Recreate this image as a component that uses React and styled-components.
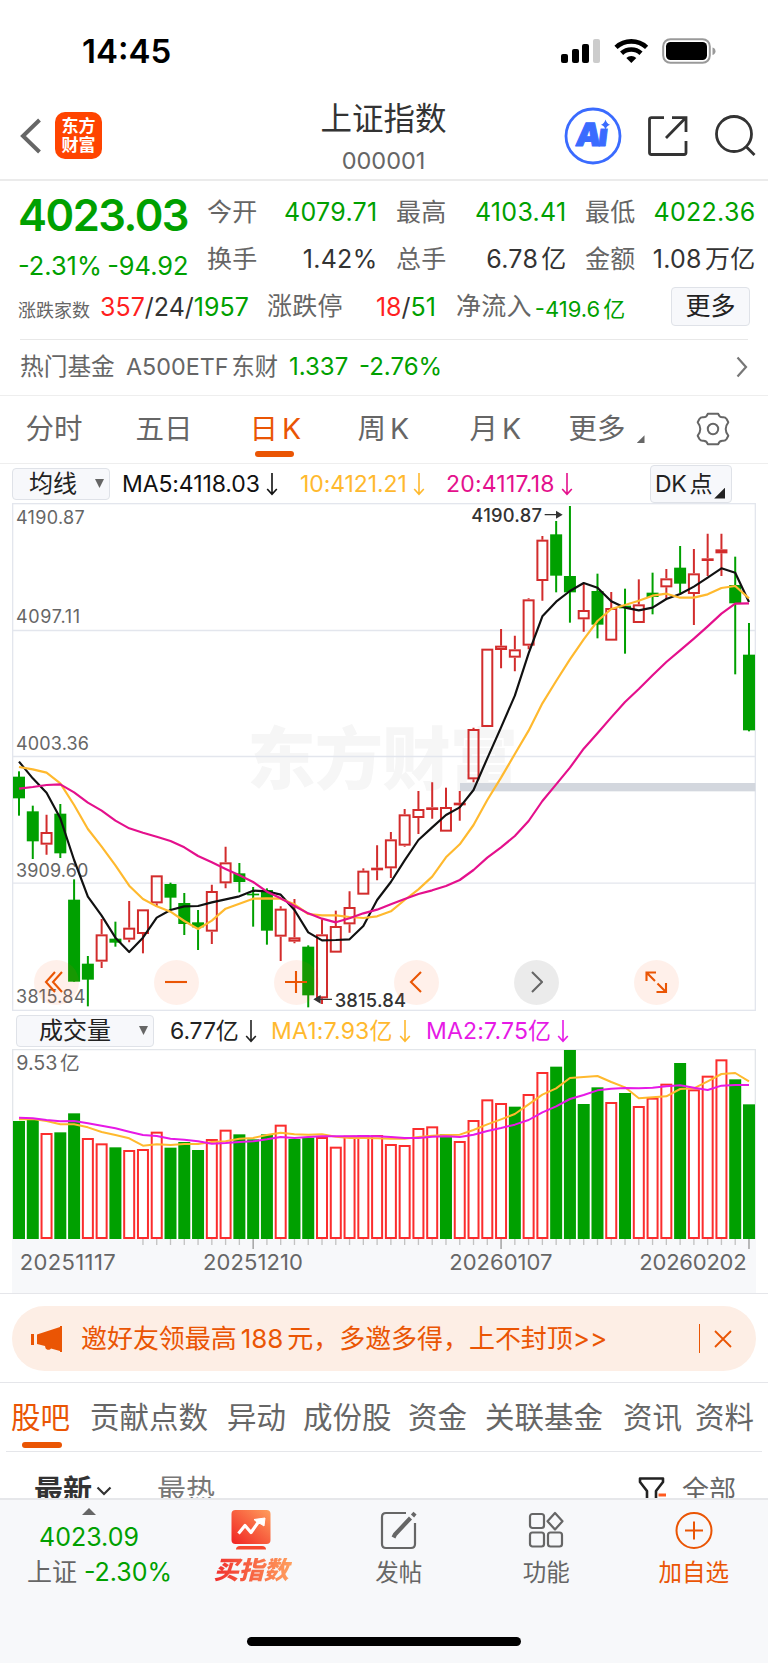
import React from 'react';
import styled, { createGlobalStyle } from 'styled-components';

const GREEN = '#00a000';
const RED = '#ff1f1f';
const ORANGE = '#ea5504';
const YELLOW = '#ffb92e';
const PINK = '#e4108c';
const MAGENTA = '#e619e6';

const STEP = 41.32;
const barX = (i) => 21 + i * STEP;

// [direction, high, body top, body bottom, low], three units to a pixel
const candles = [
  ['g', 805, 821, 886, 938], ['g', 908, 925, 1015, 1068], ['r', 935, 987, 1025, 1055],
  ['g', 903, 932, 1051, 1065], ['g', 1129, 1190, 1436, 1436], ['g', 1359, 1382, 1430, 1510],
  ['r', 1248, 1294, 1376, 1395], ['g', 1256, 1307, 1319, 1331], ['r', 1194, 1274, 1310, 1318],
  ['r', 1219, 1219, 1293, 1351], ['r', 1117, 1117, 1201, 1211], ['g', 1139, 1143, 1184, 1221],
  ['g', 1170, 1200, 1263, 1296], ['g', 1221, 1258, 1273, 1341], ['r', 1145, 1164, 1286, 1323],
  ['r', 1031, 1078, 1141, 1156], ['g', 1080, 1111, 1137, 1168], ['g', 1152, 1172, 1177, 1271],
  ['g', 1156, 1161, 1283, 1325], ['r', 1210, 1217, 1301, 1374], ['r', 1188, 1303, 1316, 1321],
  ['g', 1327, 1331, 1477, 1513], ['r', 1249, 1294, 1486, 1503], ['r', 1223, 1269, 1349, 1349],
  ['r', 1165, 1212, 1264, 1289], ['r', 1096, 1103, 1175, 1175], ['r', 1027, 1094, 1102, 1132],
  ['r', 987, 1009, 1096, 1125], ['r', 918, 934, 1028, 1031], ['r', 864, 918, 945, 993],
  ['r', 838, 913, 921, 947], ['r', 854, 912, 986, 986], ['r', 864, 899, 907, 953],
  ['r', 674, 678, 829, 838], ['r', 437, 437, 672, 672], ['r', 378, 428, 441, 496],
  ['r', 398, 439, 464, 505], ['r', 286, 289, 428, 439], ['r', 99, 110, 234, 293],
  ['g', 54, 94, 218, 268], ['g', 9, 219, 268, 359], ['r', 243, 321, 349, 386],
  ['g', 212, 264, 365, 406], ['r', 267, 315, 413, 413], ['g', 257, 308, 316, 452],
  ['r', 229, 304, 360, 360], ['g', 209, 269, 282, 334], ['r', 198, 226, 253, 289],
  ['g', 129, 194, 242, 271], ['r', 138, 211, 273, 366], ['r', 92, 166, 174, 219],
  ['r', 92, 139, 151, 219], ['g', 161, 246, 301, 514], ['g', 360, 455, 682, 685],
];

const ma5 = [776, 826, 869, 946, 1071, 1181, 1238, 1304, 1347, 1304, 1244, 1221, 1210, 1209, 1198, 1189, 1180, 1163, 1165, 1175, 1221, 1288, 1312, 1311, 1309, 1269, 1191, 1137, 1072, 1011, 973, 936, 913, 861, 766, 673, 578, 451, 340, 296, 264, 240, 254, 295, 314, 322, 314, 288, 273, 251, 224, 196, 209, 297];
const ma10 = [792, 799, 809, 841, 906, 978, 1031, 1087, 1148, 1188, 1210, 1226, 1254, 1278, 1253, 1217, 1202, 1187, 1186, 1187, 1204, 1233, 1237, 1237, 1242, 1245, 1240, 1225, 1191, 1159, 1121, 1063, 1024, 966, 891, 824, 753, 683, 601, 534, 469, 409, 354, 318, 306, 293, 278, 272, 284, 284, 274, 255, 249, 286];
const ma20 = [857, 852, 846, 844, 868, 899, 923, 953, 976, 989, 1001, 1014, 1033, 1059, 1078, 1098, 1117, 1137, 1166, 1186, 1209, 1231, 1247, 1258, 1246, 1231, 1220, 1204, 1188, 1173, 1162, 1149, 1131, 1101, 1064, 1033, 999, 954, 894, 844, 794, 737, 691, 643, 597, 558, 517, 477, 442, 407, 370, 332, 302, 301];

const volColors = 'ggrggrrgrrrgggrrgggrggrrrrrrrrrgrrrrgrrggggrgrrrgrrrgg';
const volTops = [333, 330, 371, 367, 310, 386, 402, 412, 422, 419, 367, 413, 396, 420, 389, 361, 373, 388, 373, 346, 387, 383, 383, 412, 379, 377, 377, 404, 407, 356, 351, 373, 395, 332, 270, 281, 290, 254, 188, 170, 120, 282, 232, 278, 249, 290, 265, 223, 159, 240, 199, 150, 208, 283];
const volMa1 = [328, 327, 333, 343, 343, 352, 366, 375, 385, 407, 403, 405, 402, 402, 396, 394, 386, 384, 375, 368, 373, 374, 373, 380, 384, 384, 385, 386, 386, 381, 377, 375, 374, 360, 343, 328, 312, 283, 254, 235, 204, 201, 198, 216, 232, 265, 262, 259, 237, 235, 214, 192, 189, 214];
const volMa2 = [323, 325, 330, 334, 333, 340, 347, 355, 365, 375, 378, 386, 389, 394, 401, 399, 396, 394, 388, 381, 384, 381, 379, 379, 379, 378, 379, 381, 384, 384, 380, 379, 381, 374, 363, 354, 344, 330, 307, 289, 267, 255, 241, 236, 234, 235, 233, 229, 226, 233, 240, 227, 225, 225];

const toPoints = (values) => values.map((v, i) => `${barX(i)},${v}`).join(' ');

const DownArrow = ({ color }) => (
  <ArrowSvg width="12" height="24" viewBox="0 0 12 24" fill="none" stroke={color} strokeWidth="1.6">
    <path d="M6 1v21M1.2 17 6 22.4 10.8 17" />
  </ArrowSvg>
);

const PriceChart = () => (
  <svg width="744" height="508" viewBox="0 0 2232 1524">
    <text x="706" y="842" fontSize="205" fontWeight="900" textLength="812" fill="#f6f6f6">东方财富</text>
    <g stroke="#e3e6ed" strokeWidth="4" fill="none">
      <rect x="2" y="2" width="2228" height="1520" />
      <path d="M2 382.5H2230M2 760.5H2230M2 1140.5H2230" />
    </g>
    <rect x="1344" y="840" width="886" height="25" fill="#d3d7de" />
    <g fontSize="54" fill="#666">
      <text x="12" y="62" textLength="206">4190.87</text>
      <text x="12" y="361" textLength="192">4097.11</text>
      <text x="12" y="741" textLength="219">4003.36</text>
      <text x="12" y="1121" textLength="217">3909.60</text>
      <text x="12" y="1500" textLength="208">3815.84</text>
    </g>
    {candles.map(([dir, high, top, bottom, low], i) => {
      const x = barX(i);
      if (dir === 'g') {
        return (
          <g key={i} fill={GREEN}>
            <rect x={x - 3} y={high} width="6" height={low - high} />
            <rect x={x - 18} y={top} width="36" height={bottom - top} />
          </g>
        );
      }
      return (
        <g key={i} stroke="#d22c2c" strokeWidth="6" fill="none">
          <path d={`M${x} ${high}V${top}M${x} ${bottom}V${low}`} />
          <rect x={x - 15} y={top + 3} width="30" height={bottom - top - 6} />
        </g>
      );
    })}
    <g fill="none" strokeWidth="6.5" strokeLinejoin="round">
      <polyline points={toPoints(ma5)} stroke="#111" />
      <polyline points={toPoints(ma10)} stroke={YELLOW} />
      <polyline points={toPoints(ma20)} stroke={PINK} />
    </g>
    <g fontSize="55" fontWeight="500" fill="#333">
      <text x="1378" y="58" textLength="212">4190.87</text>
      <text x="968" y="1511" textLength="214">3815.84</text>
      <path d="M1598 33h34v-10l20 12-20 12v-10h-34z" />
      <path d="M960 1487h-34v-11l-22 13 22 13v-11h34z" />
    </g>
  </svg>
);

const VolumeChart = () => (
  <svg width="744" height="244" viewBox="0 117 2232 732">
    <rect x="0" y="687" width="2232" height="162" fill="#f7f8fa" />
    <path d="M2 687V119H2230V687" fill="none" stroke="#e3e6ea" strokeWidth="4" />
    {volTops.map((top, i) => (
      volColors[i] === 'g'
        ? <rect key={i} x={barX(i) - 18} y={top} width="36" height={687 - top} fill={GREEN} />
        : <rect key={i} x={barX(i) - 15} y={top + 1} width="30" height={683 - top} fill="#fff" stroke="#fb2d2d" strokeWidth="6" />
    ))}
    {volTops.map((top, i) => (i < 9 ? null : (
      <rect key={i} x={barX(i) - 2} y="687" width="4" height={i % 18 === 17 ? 30 : 18} fill={i % 18 === 17 ? '#999' : '#c3c3c3'} />
    )))}
    <g fill="none" strokeWidth="6" strokeLinejoin="round">
      <polyline points={toPoints(volMa1)} stroke={YELLOW} />
      <polyline points={toPoints(volMa2)} stroke={MAGENTA} />
    </g>
    <g fontSize="66" fill="#666">
      <text x="13" y="179" fontSize="59" textLength="123">9.53</text>
      <text x="144" y="179" fontSize="59">亿</text>
      <text x="23" y="780" textLength="288">20251117</text>
      <text x="573" y="780" textLength="300">20251210</text>
      <text x="1312" y="780" textLength="309">20260107</text>
      <text x="1882" y="780" textLength="322">20260202</text>
    </g>
  </svg>
);

const stockTabs = ['股吧', '贡献点数', '异动', '成份股', '资金', '关联基金', '资讯', '资料'];

const App = () => (
  <Page>
    <GlobalStyle />
    <StatusBar>
      <Clock>14:45</Clock>
      <svg width="156" height="28" viewBox="0 0 156 28">
        <rect x="0" y="16" width="7" height="9" rx="2" />
        <rect x="11" y="11" width="7" height="14" rx="2" />
        <rect x="21" y="6" width="7" height="19" rx="2" />
        <rect x="32" y="1" width="7" height="24" rx="2" fill="#ccc" />
        <g fill="none" stroke="#000" strokeWidth="4.6">
          <path d="M55 9.4a22.5 22.5 0 0 1 30.6 0" />
          <path d="M60.6 15.3a14.3 14.3 0 0 1 19.4 0" />
        </g>
        <path d="M65.3 20a7.4 7.4 0 0 1 10 0l-5 5z" />
        <rect x="102.2" y="1.2" width="46.6" height="23.6" rx="7.2" fill="none" stroke="#9a9a9a" strokeWidth="2" />
        <rect x="105" y="4" width="41" height="18" rx="4.5" />
        <path d="M151.5 9.5v7.5q3-1 3-3.8t-3-3.7z" fill="#9a9a9a" />
      </svg>
    </StatusBar>

    <Header>
      <svg width="22" height="36" viewBox="0 0 22 36" fill="none" stroke="#666" strokeWidth="4">
        <path d="M19.5 2 3 18l16.5 16" />
      </svg>
      <Logo>东方<br />财富</Logo>
      <Heading>
        <Title>上证指数</Title>
        <Code>000001</Code>
      </Heading>
      <HeaderIcons>
        <svg width="58" height="58" viewBox="0 0 58 58">
          <circle cx="29" cy="29" r="27" fill="none" stroke="#3a6bff" strokeWidth="2.8" />
          <g transform="translate(4.5 0) skewX(-7)">
            <text x="11" y="39" fontSize="32" fontWeight="900" textLength="32" fill="#3a6bff" stroke="#3a6bff" strokeWidth="1" strokeLinejoin="round">Ai</text>
          </g>
          <rect x="34" y="12" width="13" height="9.5" fill="#fff" />
          <path d="M41.5 12.5q1 4 4.5 5.3-3.5 1-4.5 5-1-4-4.5-5 3.5-1.3 4.5-5.3z" fill="#3a6bff" />
        </svg>
        <svg width="40" height="40" viewBox="0 0 40 40" fill="none" stroke="#333" strokeWidth="2.8">
          <path d="M16 1.6H3.5Q1.5 1.6 1.5 3.6V36.5q0 2 2 2H36q2 0 2-2V25M24 1.6H38V16M38 1.6 18 22" />
        </svg>
        <svg width="42" height="42" viewBox="0 0 42 42" fill="none" stroke="#333" strokeWidth="2.8">
          <circle cx="20" cy="19" r="17.5" />
          <path d="M32 31.5 40.5 40" />
        </svg>
      </HeaderIcons>
    </Header>

    <Quote>
      <Summary>
        <Price>4023.03</Price>
        <Change><span>-2.31%</span><span>-94.92</span></Change>
      </Summary>
      <Stats>
        <Stat><Label>今开</Label><Value $color={GREEN}>4079.71</Value></Stat>
        <Stat><Label>最高</Label><Value $color={GREEN}>4103.41</Value></Stat>
        <Stat><Label>最低</Label><Value $color={GREEN}>4022.36</Value></Stat>
        <Stat><Label>换手</Label><Value>1.42%</Value></Stat>
        <Stat><Label>总手</Label><Value>6.78<Unit>亿</Unit></Value></Stat>
        <Stat><Label>金额</Label><Value>1.08<Unit>万亿</Unit></Value></Stat>
      </Stats>
    </Quote>
    <Breadth>
      <SmallLabel>涨跌家数</SmallLabel>
      <Counts $width="167px"><Up>357</Up>/24/<Down>1957</Down></Counts>
      <Label>涨跌停</Label>
      <Counts $width="93px" $right><Up>18</Up>/<Down>51</Down></Counts>
      <FlowLabel>净流入</FlowLabel>
      <Flow>-419.6<Unit>亿</Unit></Flow>
      <MoreButton>更多</MoreButton>
    </Breadth>
    <FundRow>
      <FundName>热门基金</FundName>
      <FundCode>A500ETF<Unit>东财</Unit></FundCode>
      <FundValue $width="70px">1.337</FundValue>
      <FundValue>-2.76%</FundValue>
      <svg width="12" height="22" viewBox="0 0 12 22" fill="none" stroke="#777" strokeWidth="2.2">
        <path d="M1.5 1.5 10 11 1.5 20.5" />
      </svg>
    </FundRow>

    <PeriodTabs>
      <Period>分时</Period>
      <Period>五日</Period>
      <Period $active>日<Latin>K</Latin></Period>
      <Period>周<Latin>K</Latin></Period>
      <Period>月<Latin>K</Latin></Period>
      <Period>更多<Corner $size="8px" $color="#666" /></Period>
      <svg width="34" height="34" viewBox="0 0 34 34" fill="none" stroke="#666" strokeWidth="2" strokeLinejoin="round">
        <path d="M11.8 1.8h10.4q1 3.6 4.6 3.5 2.4-.3 3.8 1.7l1.7 3.3q-2.6 3.2-2.6 6.7t2.6 6.7l-1.7 3.3q-1.4 2-3.8 1.7-3.6-.1-4.6 3.5H11.8q-1-3.6-4.6-3.5-2.4.3-3.8-1.7l-1.7-3.3Q4.3 20.5 4.3 17t-2.6-6.7L3.4 7q1.4-2 3.8-1.7 3.6.1 4.6-3.5z" />
        <circle cx="17" cy="17" r="5.2" />
      </svg>
    </PeriodTabs>

    <Indicators>
      <Picker $width="98px">均线<Caret /></Picker>
      <Reading $width="178px" $color="#111">MA5:4118.03<DownArrow color="#111" /></Reading>
      <Reading $width="146px" $color={YELLOW}>10:4121.21<DownArrow color={YELLOW} /></Reading>
      <Reading $wide $color={PINK}>20:4117.18<DownArrow color={PINK} /></Reading>
      <DkButton>DK<Unit>点</Unit><Corner $size="11px" $color="#222" /></DkButton>
    </Indicators>
    <Panel>
      <PriceChart />
      <ChartControls>
        <Round><svg width="24" height="22" viewBox="0 0 24 22"><path d="M11 1 2 11l9 10M18 1 9 11l9 10" /></svg></Round>
        <Round><svg width="22" height="22" viewBox="0 0 22 22"><path d="M0 11h22" /></svg></Round>
        <Round><svg width="22" height="22" viewBox="0 0 22 22"><path d="M0 11h22M11 0v22" /></svg></Round>
        <Round><svg width="14" height="22" viewBox="0 0 14 22"><path d="M12 1 2 11l10 10" /></svg></Round>
        <Round $muted><svg width="14" height="22" viewBox="0 0 14 22"><path d="M3 1l10 10L3 21" /></svg></Round>
        <Round><svg width="24" height="24" viewBox="0 0 24 24"><path d="M2.5 11V2.5H12M3 3l8 8M22 13v9h-9.5M21.5 21.5l-8-8" /></svg></Round>
      </ChartControls>
    </Panel>
    <Indicators $volume>
      <Picker $width="138px">成交量<Caret /></Picker>
      <Reading $width="101px" $color="#222">6.77亿<DownArrow color="#222" /></Reading>
      <Reading $width="155px" $wide $color={YELLOW}>MA1:7.93亿<DownArrow color={YELLOW} /></Reading>
      <Reading $wide $color={MAGENTA}>MA2:7.75亿<DownArrow color={MAGENTA} /></Reading>
    </Indicators>
    <Panel>
      <VolumeChart />
    </Panel>

    <BannerWrap>
      <Banner>
        <svg width="32" height="26" viewBox="0 0 32 26" fill={ORANGE}>
          <path d="M0 8h3v11H0zM6 8.5 29 1V0h2v26h-2v-1l-9-2.5c-1 2-5 1.5-5.5-.5l-.5-2L6 18z" />
        </svg>
        <BannerText>邀好友领最高<Digits>188</Digits>元，多邀多得，上不封顶&gt;&gt;</BannerText>
        <BannerClose>
          <svg width="18" height="18" viewBox="0 0 18 18" fill="none" stroke={ORANGE} strokeWidth="1.8">
            <path d="M1 1l16 16M17 1 1 17" />
          </svg>
        </BannerClose>
      </Banner>
    </BannerWrap>

    <StockTabs>
      {stockTabs.map((name, i) => <StockTab key={name} $active={i === 0}>{name}</StockTab>)}
    </StockTabs>
    <Feed>
      <FeedSort $active>最新</FeedSort>
      <svg width="16" height="10" viewBox="0 0 16 10" fill="none" stroke="#333" strokeWidth="2.2">
        <path d="M1.5 1.5 8 8l6.5-6.5" />
      </svg>
      <FeedSort>最热</FeedSort>
      <FeedFilter>
        <svg width="30" height="28" viewBox="0 0 30 28" fill="none" stroke="#222" strokeWidth="2.6" strokeLinejoin="round">
          <path d="M9 28V14L2 5V1.5h23V5l-7 9v14" />
          <path d="M20.5 18h7.5" stroke="#ff5a1f" strokeWidth="3" />
        </svg>
        全部
      </FeedFilter>
    </Feed>

    <BottomBar>
      <IndexItem>
        <UpTriangle />
        <Down>4023.09</Down>
        <IndexLine><span>上证</span><Down>-2.30%</Down></IndexLine>
      </IndexItem>
      <NavItem>
        <svg width="40" height="40" viewBox="0 0 40 40">
          <defs>
            <linearGradient id="buy" x1="0" y1="1" x2="1" y2="0">
              <stop offset="0" stopColor="#f02222" />
              <stop offset="1" stopColor="#ff9e5c" />
            </linearGradient>
          </defs>
          <rect x="0.5" y="0" width="39" height="34" rx="4" fill="url(#buy)" />
          <path d="M5 39.5q0-3.5 4-3.5h22q4 0 4 3.5z" fill="#f5472f" />
          <path d="M7.5 23.5 14 15.5l6 7 8.5-12" fill="none" stroke="#fff" strokeWidth="3.2" strokeLinejoin="round" />
          <path d="M23 9.5 34 8l-1 8-3-2-3-1z" fill="#fff" stroke="#fff" strokeLinejoin="round" />
        </svg>
        <BuyText>买指数</BuyText>
      </NavItem>
      <NavItem>
        <svg width="38" height="40" viewBox="0 0 38 40" fill="none" stroke="#666" strokeWidth="2.2">
          <path d="M26 3H6Q2 3 2 7v27q0 4 4 4h25q4 0 4-4V13" />
          <path d="M30.5 8 15 24.5l-1.5 3" strokeWidth="4.2" />
          <path d="M32.5 6 35 3.2" strokeWidth="4.2" />
        </svg>
        发帖
      </NavItem>
      <NavItem>
        <svg width="36" height="40" viewBox="0 0 36 40" fill="none" stroke="#666" strokeWidth="2.2" strokeLinejoin="round">
          <rect x="2" y="4" width="14" height="14" rx="2.5" />
          <rect x="2" y="22.5" width="14" height="14" rx="2.5" />
          <rect x="20" y="22.5" width="14" height="14" rx="2.5" />
          <path d="M27 3l7.5 8.3-7.5 8.2-7.5-8.2z" />
        </svg>
        功能
      </NavItem>
      <NavItem $accent>
        <svg width="40" height="40" viewBox="0 0 40 40" fill="none" stroke={ORANGE} strokeWidth="2">
          <circle cx="20" cy="20.5" r="17.5" />
          <path d="M11 20.5h18M20 11.5v18" />
        </svg>
        加自选
      </NavItem>
      <HomeIndicator />
    </BottomBar>
  </Page>
);

const GlobalStyle = createGlobalStyle`
  * {
    box-sizing: border-box;
  }

  body {
    margin: 0;
    background: #fff;
    font-family: Inter, 'Noto Sans CJK SC', sans-serif;
  }

  svg {
    display: block;
    flex: none;
  }
`;

const Page = styled.div`
  width: 768px;
  height: 1663px;
  overflow: hidden;
  color: #666;
  line-height: 1;
  white-space: nowrap;
`;

const StatusBar = styled.div`
  display: flex;
  justify-content: space-between;
  align-items: center;
  height: 92px;
  padding: 11px 51px 0 82px;
`;

const Clock = styled.div`
  font-size: 33px;
  font-weight: 600;
  color: #000;
`;

const Header = styled.header`
  display: grid;
  grid-template-columns: 35px 227px 1fr 262px;
  align-items: center;
  height: 89px;
  padding-left: 20px;
  border-bottom: 2px solid #ebebeb;
`;

const Logo = styled.div`
  width: 47px;
  height: 47px;
  padding-top: 5px;
  border-radius: 10px;
  background: #ff4400;
  color: #fff;
  font-size: 17px;
  font-weight: 700;
  line-height: 18.5px;
  text-align: center;
`;

const Heading = styled.div`
  display: flex;
  flex-direction: column;
  align-items: center;
  gap: 15px;
  width: 203px;
  padding-top: 4px;
`;

const Title = styled.div`
  font-size: 31.5px;
  color: #333;
`;

const Code = styled.div`
  font-size: 23.5px;
  color: #666;
`;

const HeaderIcons = styled.div`
  display: flex;
  align-items: center;
  gap: 26px;
  margin-left: 58px;
`;

const Quote = styled.section`
  display: flex;
  height: 101px;
  padding: 8px 13px 0 18px;
`;

const Summary = styled.div`
  display: flex;
  flex-direction: column;
  width: 189px;
  padding-top: 5px;
`;

const Price = styled.div`
  font-size: 43.5px;
  font-weight: 600;
  letter-spacing: -1.5px;
  color: ${GREEN};
`;

const Change = styled.div`
  display: flex;
  justify-content: space-between;
  width: 170.5px;
  margin-top: 15px;
  font-size: 25.4px;
  color: ${GREEN};
`;

const Stats = styled.div`
  display: grid;
  grid-template-columns: repeat(3, 169px);
  grid-auto-rows: 47px;
  column-gap: 20px;
`;

const Stat = styled.div`
  display: flex;
  justify-content: space-between;
  align-items: center;
`;

const Label = styled.span`
  font-size: 25px;
  letter-spacing: 0.3px;
  color: #666;
`;

const Value = styled.span`
  margin-right: -1.5px;
  font-size: 25px;
  letter-spacing: 0.3px;
  color: ${(props) => props.$color || '#333'};
`;

const Unit = styled.span`
  margin-left: 3px;
`;

const Breadth = styled.div`
  display: flex;
  align-items: center;
  height: 57px;
  padding: 0 18px 8px 0;
  margin-left: 19px;
`;

const SmallLabel = styled.span`
  width: 82px;
  margin-left: -1px;
  padding-top: 9px;
  font-size: 18px;
`;

const Counts = styled.span`
  width: ${(props) => props.$width};
  padding-top: 1px;
  font-size: 25px;
  text-align: ${(props) => (props.$right ? 'right' : 'left')};
  color: #333;
`;

const Up = styled.span`
  color: ${RED};
`;

const Down = styled.span`
  color: ${GREEN};
`;

const FlowLabel = styled(Label)`
  margin-left: 20px;
`;

const Flow = styled.span`
  margin-left: 3px;
  padding-top: 5px;
  font-size: 22px;
  color: ${GREEN};
`;

const MoreButton = styled.button`
  width: 79px;
  height: 39px;
  margin-left: auto;
  padding: 0;
  border: 1px solid #dfe2e8;
  border-radius: 4px;
  background: #f7f8fb;
  font: 25px Inter, 'Noto Sans CJK SC', sans-serif;
  line-height: 1;
  color: #222;
`;

const FundRow = styled.div`
  display: flex;
  align-items: center;
  height: 56px;
  margin: 0 20px;
  padding-bottom: 1px;
  border-top: 1px solid #e8e8e8;
  font-size: 24px;

  svg {
    margin-left: auto;
  }
`;

const FundName = styled.span`
  width: 106px;
  font-size: 23.7px;
`;

const FundCode = styled.span`
  width: 163px;
  font-size: 23.3px;
`;

const FundValue = styled.span`
  width: ${(props) => props.$width || 'auto'};
  color: ${GREEN};
`;

const PeriodTabs = styled.nav`
  display: grid;
  grid-template-columns: 110px 114px 108px 112px 99px 127.5px 34px;
  align-items: center;
  height: 69px;
  padding: 0 0 1px 25.5px;
  border-top: 1px solid #eee;
  border-bottom: 1px solid #eee;
`;

const Period = styled.div`
  position: relative;
  display: flex;
  align-items: center;
  font-size: 28.5px;
  color: ${(props) => (props.$active ? ORANGE : '#666')};

  &::after {
    content: '';
    display: ${(props) => (props.$active ? 'block' : 'none')};
    position: absolute;
    left: 5px;
    bottom: -14px;
    width: 39px;
    height: 6px;
    border-radius: 3px;
    background: ${ORANGE};
  }
`;

const Latin = styled.span`
  margin-left: 4px;
`;

const Corner = styled.i`
  align-self: flex-end;
  width: ${(props) => props.$size};
  height: ${(props) => props.$size};
  margin-left: ${(props) => (props.$size === '8px' ? '11px' : '2px')};
  background: ${(props) => props.$color};
  clip-path: polygon(100% 0, 100% 100%, 0 100%);
`;

const Indicators = styled.div`
  display: flex;
  align-items: center;
  height: ${(props) => (props.$volume ? '38px' : '39px')};
  padding: ${(props) => (props.$volume ? '1px 16px 0' : '0 36px 0 12px')};
`;

const Picker = styled.div`
  display: flex;
  justify-content: space-between;
  align-items: center;
  width: ${(props) => props.$width};
  height: 32px;
  margin-right: ${(props) => (props.$width === '98px' ? '12px' : '16px')};
  padding: 0 5px 0 ${(props) => (props.$width === '98px' ? '16px' : '22px')};
  border: 1px solid #dfe2e8;
  border-radius: 4px;
  background: #f7f8fb;
  font-size: 24px;
  color: #222;
`;

const Caret = styled.i`
  width: 9px;
  height: 9px;
  background: #666;
  clip-path: polygon(0 0, 100% 0, 50% 100%);
`;

const Reading = styled.div`
  display: flex;
  align-items: center;
  width: ${(props) => props.$width || 'auto'};
  padding-top: 1px;
  font-size: 23px;
  letter-spacing: ${(props) => (props.$wide ? '0.2px' : '-0.1px')};
  color: ${(props) => props.$color};
`;

const ArrowSvg = styled.svg`
  margin-left: 6px;
`;

const DkButton = styled.div`
  display: flex;
  align-items: center;
  width: 82px;
  height: 38px;
  margin-left: auto;
  padding: 1px 5px 0 4px;
  border: 1px solid #dfe2e8;
  border-radius: 4px;
  background: #f7f8fb;
  font-size: 23px;
  letter-spacing: -0.3px;
  color: #222;

  i {
    margin-bottom: 3px;
  }
`;

const Panel = styled.div`
  position: relative;
  margin: 0 12px;
`;

const ChartControls = styled.div`
  position: absolute;
  left: 21.5px;
  top: 456.5px;
  display: flex;
  gap: 75px;
`;

const Round = styled.div`
  display: flex;
  align-items: center;
  justify-content: center;
  width: 45px;
  height: 45px;
  border-radius: 50%;
  background: ${(props) => (props.$muted ? 'rgba(0, 0, 0, 0.08)' : 'rgba(255, 90, 20, 0.09)')};

  svg {
    fill: none;
    stroke: ${(props) => (props.$muted ? '#666' : ORANGE)};
    stroke-width: 2.1;
  }
`;

const BannerWrap = styled.div`
  height: 90px;
  padding: 12px 12px 0;
  border-top: 1px solid #e5e6ea;
  border-bottom: 1px solid #e5e6ea;
`;

const Banner = styled.div`
  display: flex;
  align-items: center;
  height: 65px;
  padding: 0 24px 0 19px;
  border-radius: 33px;
  background: #fdeee5;
  color: ${ORANGE};
`;

const BannerText = styled.span`
  margin-left: 18px;
  font-size: 26px;
  letter-spacing: -0.05px;
`;

const Digits = styled.span`
  margin: 0 4px;
`;

const BannerClose = styled.div`
  display: flex;
  align-items: center;
  height: 29px;
  margin-left: auto;
  padding-left: 14px;
  border-left: 1.5px solid ${ORANGE};
`;

const StockTabs = styled.nav`
  display: grid;
  grid-template-columns: 79px 137px 76px 105px 77px 138px 72px 60px;
  align-items: center;
  height: 69px;
  margin: 0 6px;
  padding: 2px 0 0 5px;
  border-bottom: 1px solid #e5e6ea;
`;

const StockTab = styled.div`
  position: relative;
  font-size: 29.5px;
  color: ${(props) => (props.$active ? ORANGE : '#666')};

  &::after {
    content: '';
    display: ${(props) => (props.$active ? 'block' : 'none')};
    position: absolute;
    left: 11px;
    bottom: -15px;
    width: 40px;
    height: 6px;
    border-radius: 3px;
    background: ${ORANGE};
  }
`;

const Feed = styled.div`
  display: flex;
  align-items: center;
  height: 46px;
  padding: 31px 32px 0 34px;
  overflow: hidden;
`;

const FeedSort = styled.span`
  width: ${(props) => (props.$active ? '62px' : 'auto')};
  margin-left: ${(props) => (props.$active ? '0' : '45px')};
  font-size: 29px;
  font-weight: ${(props) => (props.$active ? 700 : 400)};
  color: ${(props) => (props.$active ? '#333' : '#777')};
`;

const FeedFilter = styled.div`
  display: flex;
  align-items: center;
  gap: 14px;
  margin-left: auto;
  font-size: 27px;
`;

const BottomBar = styled.footer`
  position: relative;
  display: grid;
  grid-template-columns: 178px repeat(4, 147.5px);
  height: 165px;
  padding-top: 8px;
  border-top: 2px solid #e6e7ea;
  background: #f7f8fa;
`;

const IndexItem = styled.div`
  display: flex;
  flex-direction: column;
  align-items: center;
  height: 80px;
  font-size: 25px;
`;

const UpTriangle = styled.i`
  width: 14px;
  height: 7px;
  margin-bottom: 10px;
  background: #666;
  clip-path: polygon(50% 0, 100% 100%, 0 100%);
`;

const IndexLine = styled.div`
  display: flex;
  gap: 7px;
  margin: 10px 0 0 21px;
`;

const NavItem = styled.div`
  display: flex;
  flex-direction: column;
  align-items: center;
  gap: 11px;
  margin-left: -1px;
  padding-top: 2px;
  font-size: 23.5px;
  color: ${(props) => (props.$accent ? ORANGE : '#666')};
`;

const BuyText = styled.span`
  margin-top: -3px;
  padding: 0 3px;
  font-size: 25px;
  font-weight: 900;
  font-style: italic;
  background: linear-gradient(90deg, #f02a2a, #ffa05e);
  background-clip: text;
  color: transparent;
`;

const HomeIndicator = styled.div`
  position: absolute;
  left: 247px;
  bottom: 17px;
  width: 274px;
  height: 9px;
  border-radius: 5px;
  background: #000;
`;

export default App;
